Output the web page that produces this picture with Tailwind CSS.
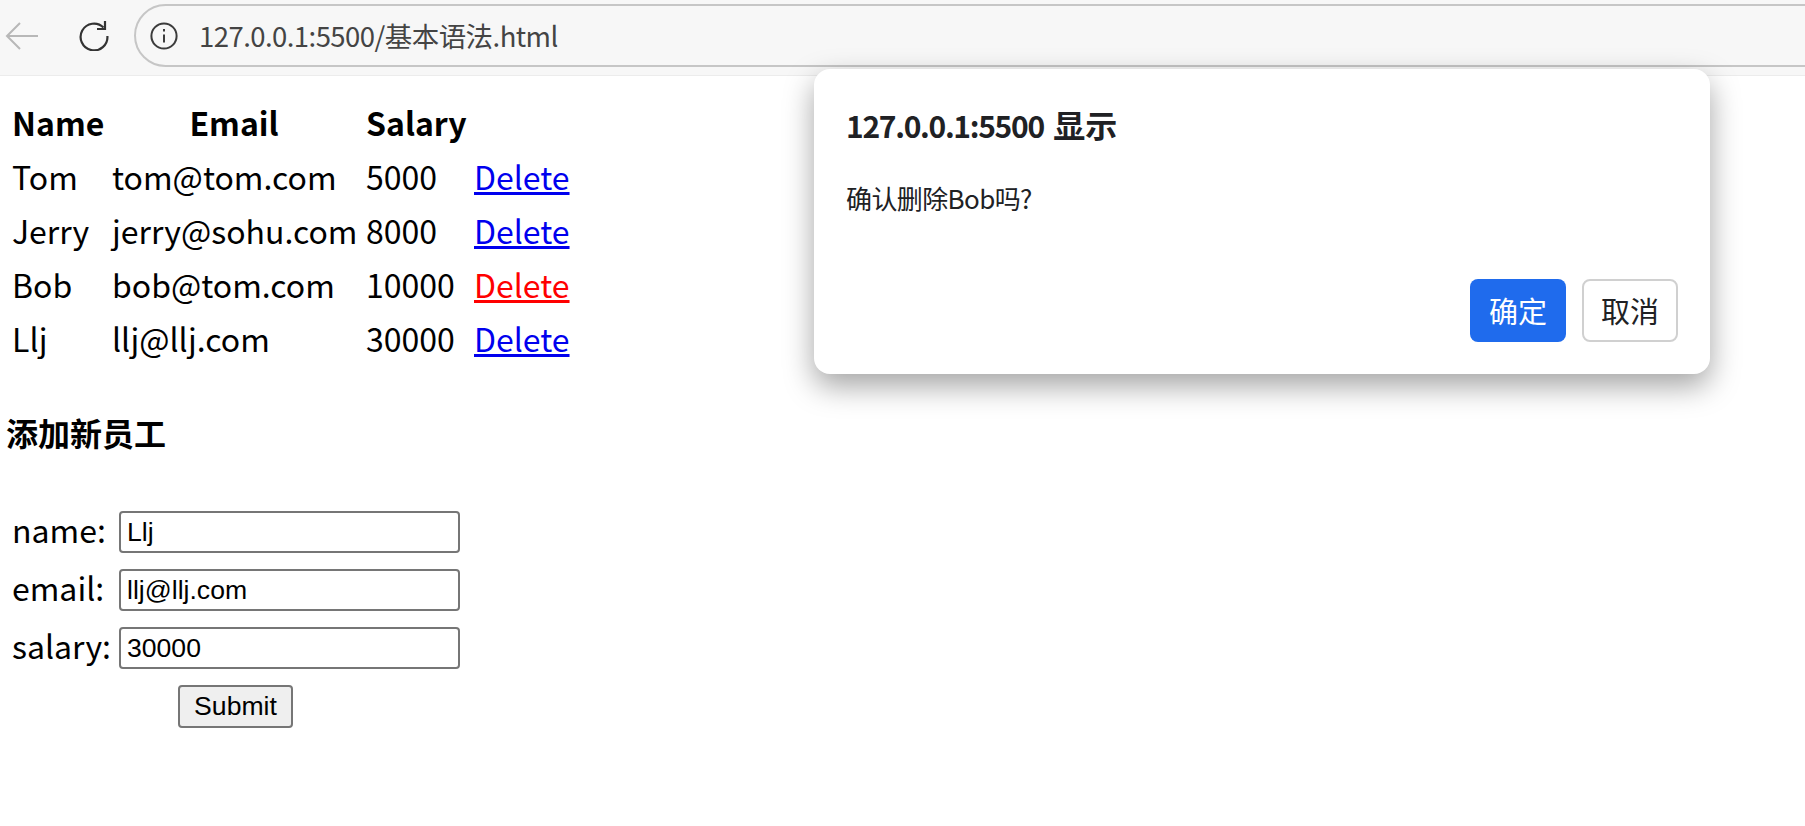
<!DOCTYPE html>
<html lang="zh-CN">
<head>
<meta charset="utf-8">
<script src="https://cdn.jsdelivr.net/npm/@tailwindcss/browser@4"></script>
</head>
<body class="relative w-[1805px] h-[826px] overflow-hidden bg-white text-black font-['Noto_Sans_CJK_SC','Noto_Sans',sans-serif]">
  <header class="flex items-center h-[76px] bg-[#f7f7f7] border-b border-[#ececec] pl-[5px] pb-[4px] overflow-hidden">
    <svg class="w-[34px] h-[30px] shrink-0" viewBox="0 0 34 30" fill="none" stroke="#b8b8b8" stroke-width="2"><path d="M33 15H2M15 2 2 15l13 13"/></svg>
    <svg class="w-[30px] h-[30px] shrink-0 ml-[40px]" viewBox="0 0 30 30" fill="none" stroke="#333" stroke-width="2.2"><path d="M24.5 6.5A13.4 13.4 0 1 0 28.4 15"/><path d="M26 0v8h-8"/></svg>
    <div class="flex items-center shrink-0 ml-[25px] w-[1780px] h-[63px] rounded-full border-2 border-[#c6c6c6] pl-[14px]">
      <svg class="w-[28px] h-[28px] shrink-0" viewBox="0 0 28 28" fill="none" stroke="#3c3c3c" stroke-width="2"><circle cx="14" cy="14" r="12.6"/><path d="M14 12.5v8M14 7v2.6"/></svg>
      <span class="ml-[21px] text-[27.5px] leading-none text-[#444] tracking-[-0.55px]">127.0.0.1:5500/基本语法.html</span>
    </div>
  </header>

  <main class="pl-[6px] pt-[19px]">
    <table class="border-separate border-spacing-0 text-[32px] leading-[54px] ml-[6px]">
      <thead>
        <tr class="h-[54px]">
          <th class="w-[100px] p-0 text-left font-bold">Name</th>
          <th class="w-[254px] p-0 font-bold pr-[10px]">Email</th>
          <th class="w-[108px] p-0 text-left font-bold">Salary</th>
          <th class="p-0"></th>
        </tr>
      </thead>
      <tbody>
        <tr class="h-[54px]"><td class="p-0">Tom</td><td class="p-0">tom@tom.com</td><td class="p-0">5000</td><td class="p-0"><a class="text-[#0000ee] underline" href="#">Delete</a></td></tr>
        <tr class="h-[54px]"><td class="p-0">Jerry</td><td class="p-0">jerry@sohu.com</td><td class="p-0">8000</td><td class="p-0"><a class="text-[#0000ee] underline" href="#">Delete</a></td></tr>
        <tr class="h-[54px]"><td class="p-0">Bob</td><td class="p-0">bob@tom.com</td><td class="p-0">10000</td><td class="p-0"><a class="text-[#ff0000] underline" href="#">Delete</a></td></tr>
        <tr class="h-[54px]"><td class="p-0">Llj</td><td class="p-0">llj@llj.com</td><td class="p-0">30000</td><td class="p-0"><a class="text-[#0000ee] underline" href="#">Delete</a></td></tr>
      </tbody>
    </table>

    <h3 class="mt-[44px] text-[32px] leading-[46px] font-bold">添加新员工</h3>

    <form class="mt-[56px] ml-[6px] text-[32px] w-[448px]">
      <div class="flex items-center h-[42px] mb-[16px]"><label class="w-[107px] pb-[6px]">name:</label><input class="w-[341px] h-[42px] border-2 border-[#767676] rounded-[4px] px-[6px] text-[26.6px] font-['Liberation_Sans',sans-serif]" value="Llj"></div>
      <div class="flex items-center h-[42px] mb-[16px]"><label class="w-[107px] pb-[6px]">email:</label><input class="w-[341px] h-[42px] border-2 border-[#767676] rounded-[4px] px-[6px] text-[26.6px] font-['Liberation_Sans',sans-serif]" value="llj@llj.com"></div>
      <div class="flex items-center h-[42px] mb-[16px]"><label class="w-[107px] pb-[6px]">salary:</label><input class="w-[341px] h-[42px] border-2 border-[#767676] rounded-[4px] px-[6px] text-[26.6px] font-['Liberation_Sans',sans-serif]" value="30000"></div>
      <div class="flex"><button type="button" class="ml-[166px] w-[115px] h-[43px] border-2 border-[#767676] rounded-[4px] bg-[#efefef] text-[26.6px] leading-none font-['Liberation_Sans',sans-serif]">Submit</button></div>
    </form>
  </main>

  <div class="absolute left-[814px] top-[69px] w-[896px] h-[305px] rounded-[16px] bg-white shadow-[0_12px_30px_rgba(0,0,0,0.36)] pl-[32px] pr-[32px] pt-[33px] flex flex-col text-[#202124]">
    <div class="text-[30px] leading-[44px] font-bold tracking-[-1.3px]">127.0.0.1:5500 <span class="ml-[4px] text-[32px] tracking-normal">显示</span></div>
    <div class="mt-[33px] text-[26px] leading-[36px] tracking-[-0.6px]">确认删除Bob吗?</div>
    <div class="mt-auto mb-[32px] flex justify-end gap-[16px]">
      <button type="button" class="w-[96px] h-[63px] rounded-[8px] bg-[#1f6bed] text-white text-[29px]">确定</button>
      <button type="button" class="w-[96px] h-[63px] rounded-[8px] border-2 border-[#d0d0d0] bg-white text-[29px] text-[#202124]">取消</button>
    </div>
  </div>
</body>
</html>
